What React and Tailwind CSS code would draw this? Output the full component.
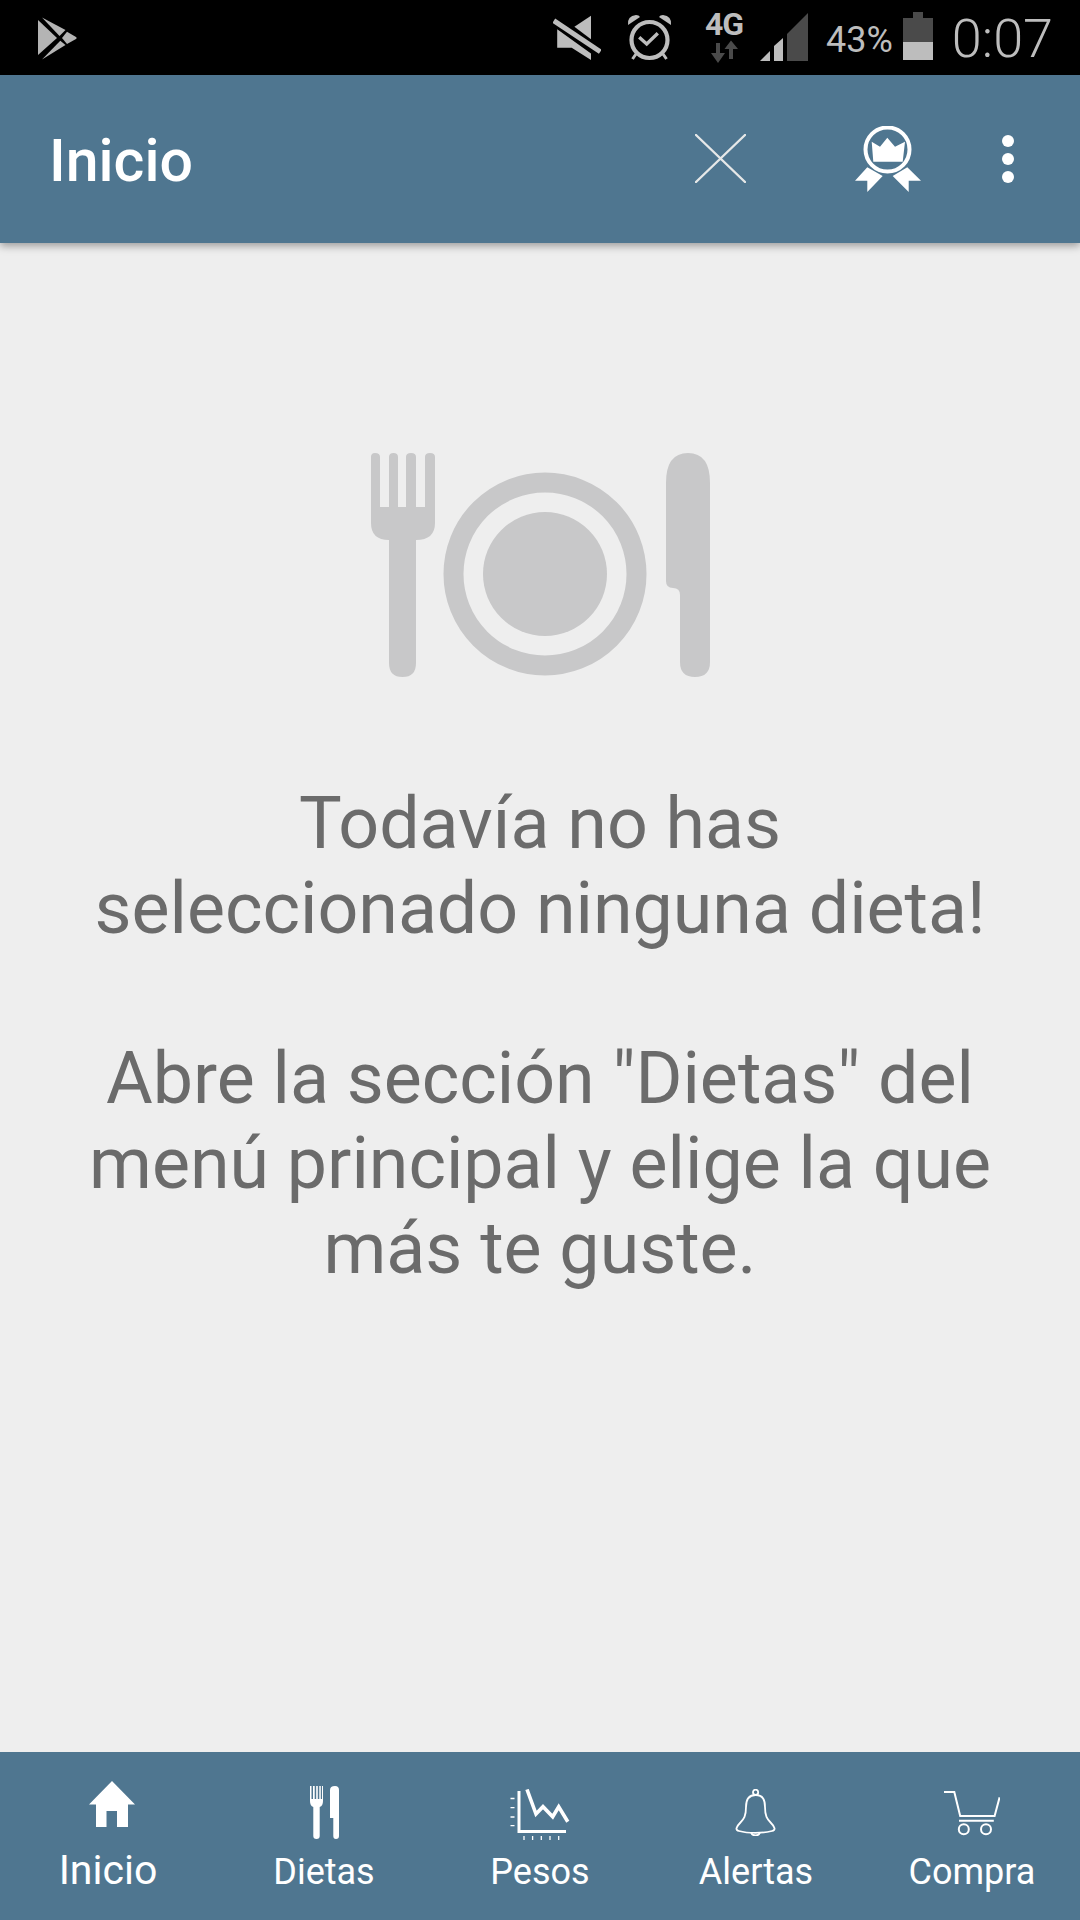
import React from 'react';

const PlayIcon = () => (
    <svg width="40" height="44" viewBox="0 0 40 44" fill="#b4b4b4">
        <path d="M0 3V38L19 21Z" />
        <path d="M4 0.5L27.5 13L21.5 19Z" />
        <path d="M4 42.5L27.5 28L22.3 23.7Z" />
        <path d="M29 14.7L38 20Q39.5 21 38 22L29 27L24 21Z" />
    </svg>
);

const MuteIcon = () => (
    <svg width="48" height="48" viewBox="0 0 48 48" fill="#bdbdbd">
        <path d="M21.4 12.7L38 1.7V25.3Z" />
        <path d="M4.2 15.3V33.7H18.7L38 46V39.5Z" />
        <path d="M0.8 6.7L47.3 37.7" stroke="#bdbdbd" strokeWidth="5" fill="none" />
    </svg>
);

const AlarmIcon = () => (
    <svg width="45" height="48" viewBox="0 0 45 48" fill="none" stroke="#bdbdbd">
        <circle cx="22.5" cy="26" r="18" strokeWidth="4.2" />
        <path d="M12.2 23.3L19.7 30L30.8 19.3" strokeWidth="3.4" />
        <path d="M1 11Q0 2 9 1Q12 1 13 3Z" fill="#bdbdbd" stroke="none" />
        <path d="M44 11Q45 2 36 1Q33 1 32 3Z" fill="#bdbdbd" stroke="none" />
        <path d="M9 40L5.5 45M36 40L39.5 45" strokeWidth="3" />
    </svg>
);

const ArrowsIcon = () => (
    <svg width="27" height="24" viewBox="0 0 27 24">
        <path d="M5 3H9V13H14L7 23L0 13H5Z" fill="#4a4a4a" />
        <path d="M18 19H22V9H27L20 0.5L13.5 9H18Z" fill="#4a4a4a" />
    </svg>
);

const SignalIcon = () => (
    <svg width="48" height="48" viewBox="0 0 48 48">
        <path d="M0 48L10 38V48Z" fill="#bdbdbd" />
        <path d="M14 48V33L23 25V48Z" fill="#bdbdbd" />
        <path d="M27 48V21L48 0V48Z" fill="#4a4a4a" />
    </svg>
);

const BatteryIcon = () => (
    <svg width="30" height="48" viewBox="0 0 30 48">
        <path d="M10 0H20V6H30V30H0V6H10Z" fill="#4a4a4a" />
        <rect x="0" y="30" width="30" height="18" fill="#bdbdbd" />
    </svg>
);

const AwardIcon = () => (
    <svg width="66" height="66" viewBox="0 0 66 66" fill="#ffffff">
        <circle cx="32.5" cy="23.5" r="22" fill="none" stroke="#ffffff" strokeWidth="4" />
        <path d="M16.7 15.7L25 20.7L32.3 11.7L40 20.7L50 15.7L47.7 35.7H18.3Z" />
        <path d="M12.3 41.3L27.7 50L12.3 66V54.7H0Z" />
        <path d="M52.3 41.3L37.7 50L53.7 66V54.7H66Z" />
    </svg>
);

const DishIcon = () => (
    <svg width="340" height="224" viewBox="0 0 340 224" fill="#c8c8c9">
        <path d="M1 4Q1 0 5 0Q10 0 10 4V54H19V4Q19 0 23.5 0Q28 0 28 4V54H36V4Q36 0 41 0Q46 0 46 4V54H55V4Q55 0 60 0Q65 0 65 4V70Q65 87 46 87V210Q46 224 32.5 224Q19 224 19 210V87Q1 87 1 70Z" />
        <circle cx="175" cy="121" r="91.5" fill="none" stroke="#c8c8c9" strokeWidth="20" />
        <circle cx="175" cy="121" r="62" />
        <path d="M296 30Q296 0 318 0Q340 0 340 30V209Q340 224 325 224Q310 224 310 209V142Q310 135 303 135Q296 135 296 128Z" />
    </svg>
);

const HomeIcon = () => (
    <svg width="46" height="46" viewBox="0 0 46 46" fill="#ffffff">
        <path d="M23 0L46 23.5H39V46H28V30H17.5V46H7V23.5H0Z" />
    </svg>
);

const CutleryIcon = () => (
    <svg width="30" height="53" viewBox="0 0 30 53" fill="#ffffff">
        <path d="M0 0H1.5V13H3V0H4.7V13H6.2V0H7.8V13H9.3V0H10.8V13H12V0H13V15Q13 20 9.7 21V50Q9.7 53 6.5 53Q3.3 53 3.3 50V21Q0 20 0 15Z" />
        <path d="M20 4Q20 0 25 0Q29 0 29 4V50Q29 53 26 53Q23.3 53 23.3 50V32H20Z" />
    </svg>
);

const ChartIcon = () => (
    <svg width="60" height="53" viewBox="0 0 60 53" fill="none" stroke="#ffffff">
        <path d="M9 2V42.5H56" strokeWidth="3" />
        <path d="M17 0.5L26 25L33 17.7L42.7 27.7L48.7 17.7L57.8 32.7" strokeWidth="3.6" />
        <path d="M0.5 9.5H4.5M0.5 18.7H4.5M0.5 28H4.5M0.5 36.7H4.5" strokeWidth="1.3" />
        <path d="M14 47V51M22.6 47V51M31.3 47V51M40 47V51M48.7 47V51" strokeWidth="1.3" />
    </svg>
);

const BellIcon = () => (
    <svg width="42" height="47" viewBox="0 0 42 47" fill="none" stroke="#ffffff" strokeWidth="1.8">
        <circle cx="20.6" cy="3.3" r="2.6" />
        <path d="M20.6 6C13 6 11 11 11 18C11 27 9 30 5 34C1 38 0 41 4 42C13 44.5 28 44.5 37 42C41 41 40 38 36 34C32 30 30 27 30 18C30 11 28 6 20.6 6Z" />
        <path d="M16 43.5Q17 46.5 20.6 46.5Q24 46.5 25 43.5" />
    </svg>
);

const CartIcon = () => (
    <svg width="56" height="45" viewBox="0 0 56 45" fill="none" stroke="#ffffff" strokeWidth="2">
        <path d="M0 1H10.3L16.2 25H50.6L55.6 6.3" />
        <path d="M15 29.7H49.8" />
        <circle cx="19.8" cy="38.3" r="5" />
        <circle cx="42" cy="38.3" r="5" />
    </svg>
);

const NavItem = ({ icon, label, iconClass, labelClass }) => (
    <div className="flex flex-col items-center">
        <div className={`flex h-[62px] items-start justify-center ${iconClass}`}>{icon}</div>
        <span className={`h-[48px] text-white leading-[48px] ${labelClass}`}>{label}</span>
    </div>
);

const App = () => {
    return (
        <div className="flex h-[1920px] w-[1080px] flex-col overflow-hidden bg-[#eeeeee] font-['Roboto',sans-serif]">
            {/* status bar */}
            <div className="flex h-[75px] shrink-0 items-start bg-black pl-[38px] text-[#bdbdbd]">
                <div className="mt-[17px]"><PlayIcon /></div>
                <div className="ml-[475px] mt-[14px]"><MuteIcon /></div>
                <div className="ml-[26px] mt-[14px]"><AlarmIcon /></div>
                <div className="ml-[31px] flex w-[42px] flex-col items-center">
                    <span className="mt-[10px] h-[28px] text-[32px] font-bold leading-[28px] tracking-[-1px]">4G</span>
                    <div className="mt-[2px]"><ArrowsIcon /></div>
                </div>
                <div className="ml-[15px] mt-[13px]"><SignalIcon /></div>
                <span className="ml-[18px] mt-[19px] text-[36px] leading-[42px]">43%</span>
                <div className="ml-[10px] mt-[12px]"><BatteryIcon /></div>
                <span className="ml-[19px] mt-[9px] text-[54px] font-light leading-[60px]">0:07</span>
            </div>

            {/* header */}
            <div className="relative z-10 flex h-[168px] shrink-0 items-start bg-[#4f7690] pl-[49px] shadow-[0_3px_8px_rgba(0,0,0,0.35)]">
                <span className="mt-[52px] w-[146px] text-[59px] font-medium leading-[68px] text-white">Inicio</span>
                <svg className="ml-[500px] mt-[59px]" width="51" height="49" viewBox="0 0 51 49" fill="none" stroke="#e6e8e8" strokeWidth="2.4" strokeLinecap="round">
                    <path d="M1 1L50 48M50 1L1 48" />
                </svg>
                <div className="ml-[109px] mt-[51px]"><AwardIcon /></div>
                <div className="ml-[81px] mt-[60px] flex flex-col gap-[6px]">
                    <div className="size-3 rounded-full bg-white" />
                    <div className="size-3 rounded-full bg-white" />
                    <div className="size-3 rounded-full bg-white" />
                </div>
            </div>

            {/* empty state */}
            <div className="flex flex-1 flex-col items-center pt-[210px]">
                <DishIcon />
                <p className="mt-[104px] whitespace-nowrap text-center text-[71.7px] leading-[85px] text-[#6b6b6b]">
                    Todavía no has<br />
                    seleccionado ninguna dieta!<br />
                    <br />
                    Abre la sección "Dietas" del<br />
                    menú principal y elige la que<br />
                    más te guste.
                </p>
            </div>

            {/* bottom nav */}
            <div className="grid h-[168px] shrink-0 grid-cols-5 bg-[#4f7690] pt-[29px]">
                <NavItem icon={<HomeIcon />} label="Inicio" iconClass="pl-[7px]" labelClass="mt-[3px] text-[41px]" />
                <NavItem icon={<CutleryIcon />} label="Dietas" iconClass="pl-[2px] pt-[5px]" labelClass="mt-[5px] text-[36px]" />
                <NavItem icon={<ChartIcon />} label="Pesos" iconClass="pt-[8px]" labelClass="mt-[5px] text-[36px]" />
                <NavItem icon={<BellIcon />} label="Alertas" iconClass="pt-[8px]" labelClass="mt-[5px] text-[36px]" />
                <NavItem icon={<CartIcon />} label="Compra" iconClass="pt-[10px]" labelClass="mt-[5px] text-[36px]" />
            </div>
        </div>
    );
};

export default App;
